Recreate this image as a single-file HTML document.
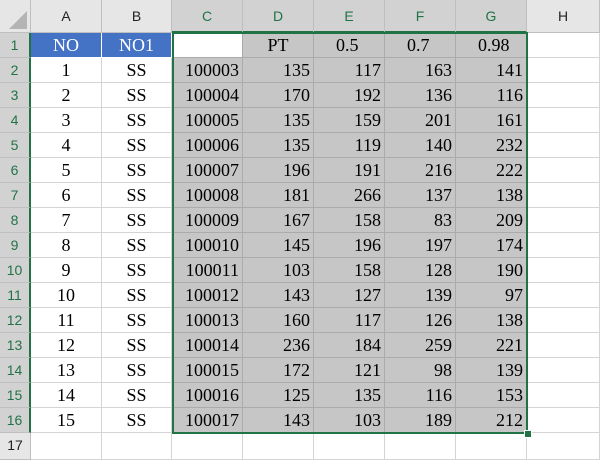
<!DOCTYPE html><html><head><style>
body{margin:0;width:600px;height:460px;overflow:hidden;background:#fff;position:relative;font-family:"Liberation Serif",serif}
.c{position:absolute;box-sizing:border-box;border-right:1px solid #d4d4d4;border-bottom:1px solid #d4d4d4;font-size:18px;line-height:25px;color:#000;white-space:nowrap}
.h{position:absolute;box-sizing:border-box;font-family:"Liberation Sans",sans-serif;font-size:14px;text-align:center;border-right:1px solid #bfbfbf;border-bottom:1px solid #bfbfbf;background:#e6e6e6;color:#222}
.hs{background:#d2d2d2;color:#217346}
</style></head><body>
<div id="g"></div>
<script>
var cols=[31,102,172,243,314,385,456,527,600],names="ABCDEFGH";
var rt=33,rh=25,out="";
out+='<div class="h" style="left:0;top:0;width:31px;height:33px;background:#e6e6e6"><div style="position:absolute;right:3px;bottom:3px;width:0;height:0;border-left:18px solid transparent;border-bottom:18px solid #b4b4b4"></div></div>';
for(var i=0;i<8;i++){var s=(i>=2&&i<=6);out+='<div class="h'+(s?' hs':'')+'" style="left:'+cols[i]+'px;top:0;width:'+(cols[i+1]-cols[i])+'px;height:33px;line-height:33px;'+(s?'border-bottom:2px solid #217346;':'')+'">'+names[i]+'</div>';}
for(var r=1;r<=17;r++){var s=r<=16;out+='<div class="h'+(s?' hs':'')+'" style="left:0;top:'+(rt+(r-1)*rh)+'px;width:31px;height:'+(r==17?27:rh)+'px;line-height:'+rh+'px;'+(s?'border-right:2px solid #217346;':'')+'">'+r+'</div>';}
var data=[[135,117,163,141],[170,192,136,116],[135,159,201,161],[135,119,140,232],[196,191,216,222],[181,266,137,138],[167,158,83,209],[145,196,197,174],[103,158,128,190],[143,127,139,97],[160,117,126,138],[236,184,259,221],[172,121,98,139],[125,135,116,153],[143,103,189,212]];
for(var r=1;r<=17;r++){for(var i=0;i<8;i++){
 var t='',al='center',bg='#fff',bc='#d4d4d4',pad='';
 if(r<=16&&i>=2&&i<=6){bg='#c6c6c6';bc='#ababab';}
 if(r==1){ if(i==0)t='NO';if(i==1)t='NO1';if(i==3)t='PT';if(i==4)t='0.5';if(i==5)t='0.7';if(i==6)t='0.98';
  if(i<2){bg='#4472c4';bc='#fff';}
  if(i==2)bg='#fff';
  if(i>=4&&i<=6){al='left';pad='padding-left:22px;';}
 } else if(r<=16){ if(i==0)t=r-1;if(i==1)t='SS';if(i==2){t=100001+r;al='right';pad='padding-right:3px;';}
  if(i>=3&&i<=6){t=data[r-2][i-3];al='right';pad='padding-right:3px;';}}
 var col=(r==1&&i<2)?'#fff':'#000';
 out+='<div class="c" style="left:'+cols[i]+'px;top:'+(rt+(r-1)*rh)+'px;width:'+(cols[i+1]-cols[i])+'px;height:'+(r==17?27:rh)+'px;background:'+bg+';border-color:'+bc+';text-align:'+al+';color:'+col+';'+pad+'">'+t+'</div>';
}}
out+='<div style="position:absolute;left:172px;top:32px;width:356px;height:402px;border:2px solid #217346;box-sizing:border-box"></div>';
out+='<div style="position:absolute;left:524px;top:430px;width:6px;height:6px;background:#217346;border:1px solid #fff"></div>';
document.getElementById('g').innerHTML=out;
</script>
</body></html>
